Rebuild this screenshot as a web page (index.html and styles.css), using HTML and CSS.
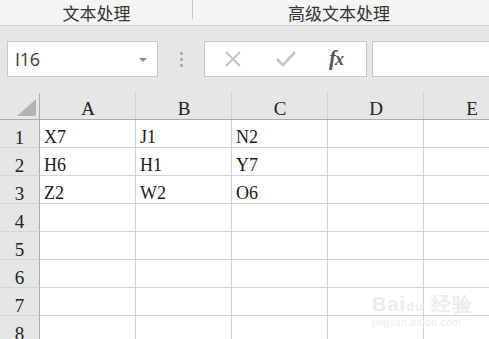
FILE: index.html
```html
<!DOCTYPE html>
<html>
<head>
<meta charset="utf-8">
<link rel="stylesheet" href="styles.css">
</head>
<body>
<div class="page">
  <div class="tabs">
    <div class="tab tab-first">文本处理</div>
    <div class="tab tab-second">高级文本处理</div>
  </div>
  <div class="toolbar">
    <div class="namebox">
      <span class="cellref">I16</span>
      <span class="caret"></span>
    </div>
    <div class="grip"><i></i><i></i><i></i></div>
    <div class="fxbox">
      <svg class="ico ico-x" width="20" height="20" viewBox="0 0 20 20"><path d="M3 3 L17 17 M17 3 L3 17" stroke="#c4c4c4" stroke-width="2" fill="none"/></svg>
      <svg class="ico ico-check" width="22" height="20" viewBox="0 0 22 20"><path d="M2 10 L8 16 L20 3" stroke="#c4c4c4" stroke-width="2.6" fill="none"/></svg>
      <span class="fx">f<span class="fx-x">x</span></span>
    </div>
    <div class="formula"></div>
  </div>
  <div class="sheet">
    <div class="hdr corner"><span class="tri"></span></div>
    <div class="hdr col">A</div>
    <div class="hdr col">B</div>
    <div class="hdr col">C</div>
    <div class="hdr col">D</div>
    <div class="hdr col">E</div>

    <div class="rh">1</div><div class="cell">X7</div><div class="cell">J1</div><div class="cell">N2</div><div class="cell"></div><div class="cell"></div>
    <div class="rh">2</div><div class="cell">H6</div><div class="cell">H1</div><div class="cell">Y7</div><div class="cell"></div><div class="cell"></div>
    <div class="rh">3</div><div class="cell">Z2</div><div class="cell">W2</div><div class="cell">O6</div><div class="cell"></div><div class="cell"></div>
    <div class="rh">4</div><div class="cell"></div><div class="cell"></div><div class="cell"></div><div class="cell"></div><div class="cell"></div>
    <div class="rh">5</div><div class="cell"></div><div class="cell"></div><div class="cell"></div><div class="cell"></div><div class="cell"></div>
    <div class="rh">6</div><div class="cell"></div><div class="cell"></div><div class="cell"></div><div class="cell"></div><div class="cell"></div>
    <div class="rh">7</div><div class="cell"></div><div class="cell"></div><div class="cell"></div><div class="cell"></div><div class="cell"></div>
    <div class="rh">8</div><div class="cell"></div><div class="cell"></div><div class="cell"></div><div class="cell"></div><div class="cell"></div>
  </div>
  <div class="watermark">
    <div class="wm-top">Bai<span class="wm-du">du</span> 经验</div>
    <div class="wm-bottom">jingyan.baidu.com</div>
  </div>
</div>
</body>
</html>
```
FILE: styles.css
```css
html, body {
  margin: 0;
  padding: 0;
  background: #ffffff;
}
.page {
  position: relative;
  width: 489px;
  height: 339px;
  overflow: hidden;
  font-family: "Liberation Serif", serif;
}
.tabs {
  display: flex;
  height: 25px;
  background: #f4f4f4;
  border-bottom: 1px solid #d2d2d2;
  font-family: "Noto Sans CJK SC", "Noto Sans", sans-serif;
  font-size: 17px;
  color: #333333;
}
.tab {
  display: flex;
  justify-content: center;
  align-items: center;
  height: 25px;
  line-height: 1;
  padding-bottom: 1px;
  box-sizing: border-box;
}
.tab-first {
  width: 193px;
  flex: none;
  position: relative;
}
.tab-first::after {
  content: "";
  position: absolute;
  right: 0;
  top: 0;
  height: 19px;
  width: 1px;
  background: #c8c8c8;
}
.tab-second {
  width: 292px;
  flex: none;
}
.toolbar {
  display: flex;
  align-items: flex-start;
  height: 67px;
  padding-top: 15px;
  box-sizing: border-box;
  background: #e6e6e6;
}
.namebox {
  margin-left: 7px;
  width: 151px;
  height: 36px;
  box-sizing: border-box;
  background: #ffffff;
  border: 1px solid #c6c6c6;
  display: flex;
  align-items: center;
  justify-content: space-between;
  padding: 0 10px 0 7px;
}
.cellref {
  font-family: "Open Sans", "Noto Sans", sans-serif;
  font-size: 18px;
  color: #3a3a3a;
  letter-spacing: -0.3px;
}
.caret {
  width: 0;
  height: 0;
  border-left: 4px solid transparent;
  border-right: 4px solid transparent;
  border-top: 4px solid #8a8a8a;
  margin-top: 1px;
}
.grip {
  width: 46px;
  height: 36px;
  display: flex;
  flex-direction: column;
  align-items: center;
  justify-content: center;
  gap: 3px;
}
.grip i {
  display: block;
  width: 3px;
  height: 3px;
  background: #b0b0b0;
}
.fxbox {
  width: 163px;
  height: 36px;
  box-sizing: border-box;
  background: #ffffff;
  border: 1px solid #c6c6c6;
  display: flex;
  align-items: center;
  position: relative;
}
.ico-x {
  margin-left: 18px;
}
.ico-check {
  margin-left: 32px;
}
.fx {
  margin-left: 32px;
  font-family: "Liberation Serif", serif;
  font-style: italic;
  font-weight: bold;
  font-size: 21px;
  color: #555555;
  letter-spacing: -1px;
  margin-top: -2px;
}
.fx-x {
  font-size: 18px;
}
.formula {
  margin-left: 5px;
  flex: 1;
  height: 36px;
  box-sizing: border-box;
  background: #ffffff;
  border: 1px solid #c6c6c6;
  border-right: none;
}
.sheet {
  display: grid;
  grid-template-columns: 40px 96px 96px 96px 96px 96px;
  grid-template-rows: 27px repeat(8, 28px);
}
.hdr {
  background: #e6e6e6;
  border-bottom: 1px solid #ababab;
  box-sizing: border-box;
  display: flex;
  align-items: center;
  justify-content: center;
  font-size: 19px;
  color: #222222;
  position: relative;
}
.hdr::after {
  content: "";
  position: absolute;
  right: 0;
  top: 0;
  bottom: 0;
  width: 1px;
  background: #d0d0d0;
}
.corner::after {
  background: #ababab;
}
.col {
  padding-top: 5px;
}
.tri {
  position: absolute;
  right: 4px;
  bottom: 3px;
  width: 0;
  height: 0;
  border-left: 19px solid transparent;
  border-bottom: 17px solid #b4b4b4;
}
.rh {
  background: #e6e6e6;
  border-right: 1px solid #ababab;
  border-bottom: 1px solid #d4d4d4;
  box-sizing: border-box;
  display: flex;
  align-items: center;
  justify-content: center;
  font-size: 19px;
  color: #222222;
  padding-top: 8px;
}
.cell {
  border-right: 1px solid #d4d4d4;
  border-bottom: 1px solid #d4d4d4;
  box-sizing: border-box;
  display: flex;
  align-items: center;
  padding-left: 4px;
  padding-top: 8px;
  font-size: 18px;
  color: #1a1a1a;
}
.watermark {
  position: absolute;
  left: 372px;
  top: 294px;
  color: #ececec;
  font-family: "Liberation Sans", sans-serif;
  line-height: 1;
}
.wm-top {
  font-size: 20px;
  font-weight: bold;
  letter-spacing: 1px;
}
.wm-du {
  font-size: 13px;
}
.wm-bottom {
  font-size: 10px;
  margin-top: 4px;
  letter-spacing: 0.5px;
}
```
